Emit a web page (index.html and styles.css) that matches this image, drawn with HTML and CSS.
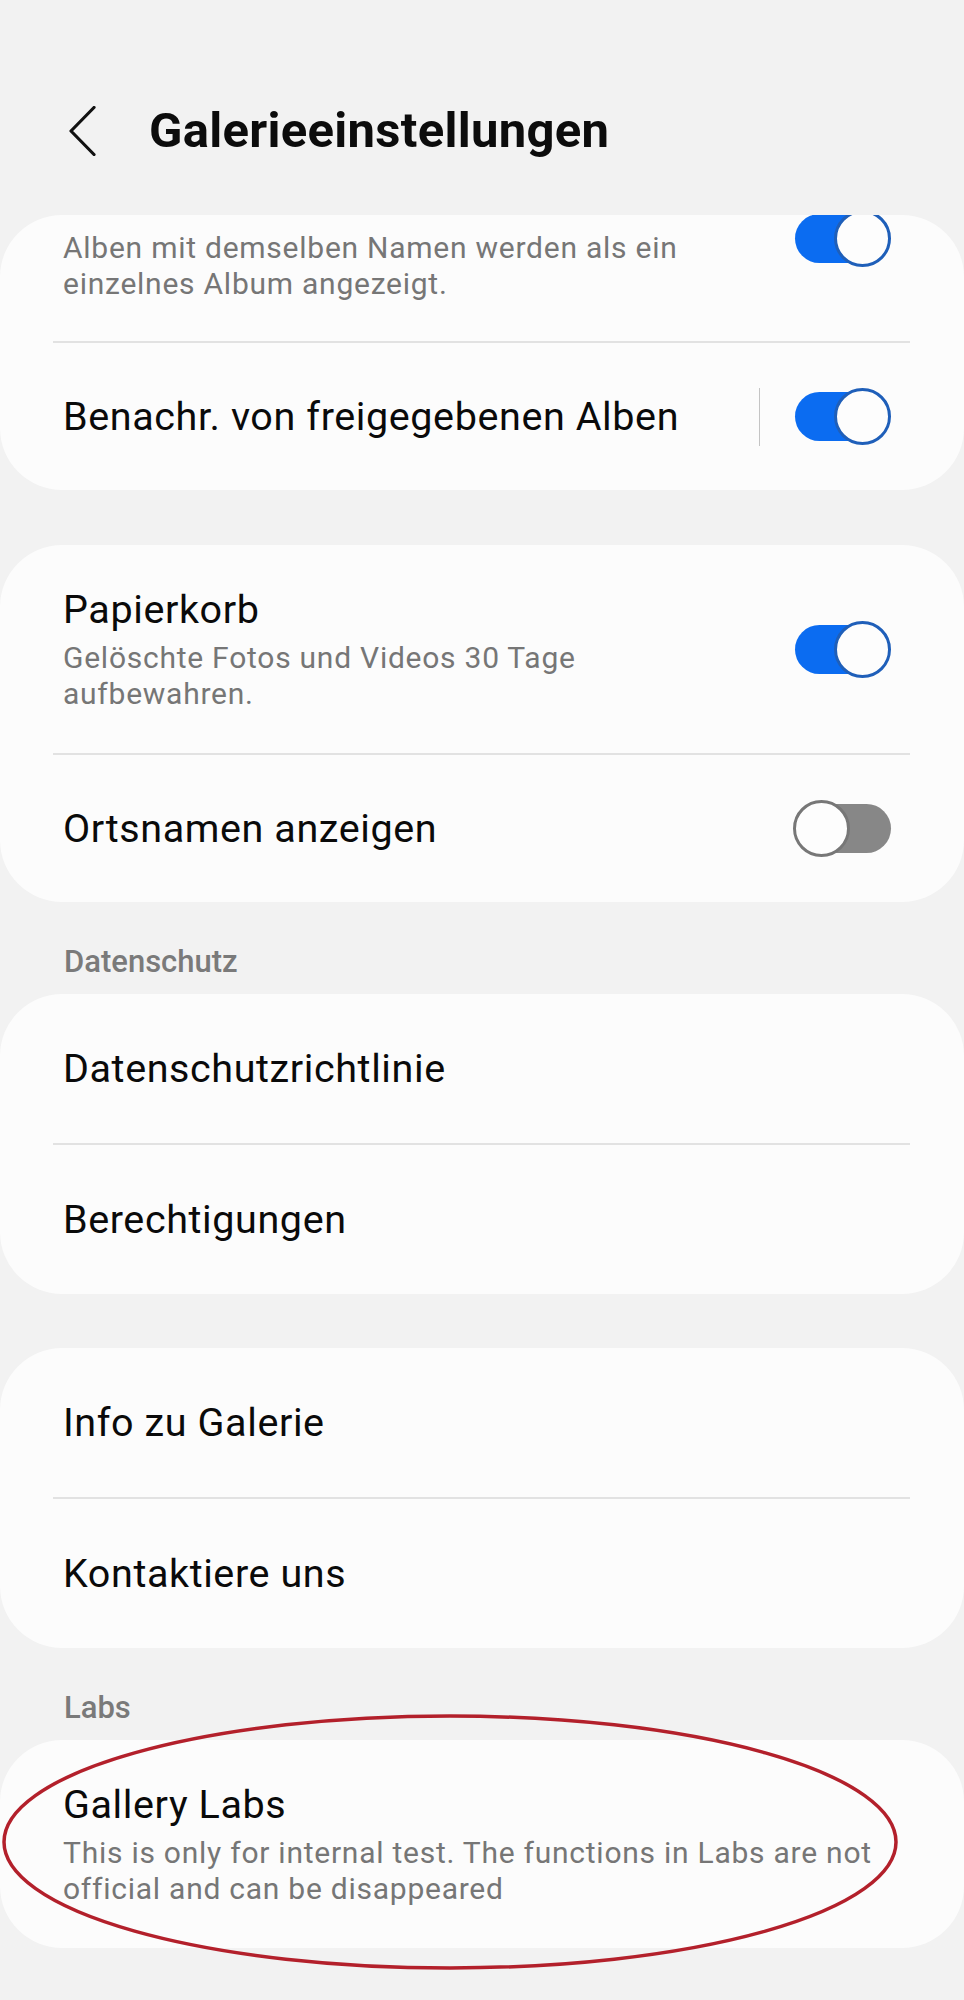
FILE: index.html
```html
<!DOCTYPE html>
<html lang="de">
<head>
<meta charset="utf-8">
<title>Galerieeinstellungen</title>
<link rel="stylesheet" href="styles.css">
</head>
<body>
<div class="screen">
  <header class="appbar">
    <svg class="back" width="30" height="50" viewBox="0 0 30 50" aria-hidden="true">
      <path d="M26 1.5 L3 25 L26 48.5" fill="none" stroke="#111" stroke-width="3.2" stroke-linecap="round" stroke-linejoin="round"/>
    </svg>
    <h1 class="title">Galerieeinstellungen</h1>
  </header>

  <section class="card">
    <div class="row row-clipped">
      <div class="text">
        <div class="sub">Alben mit demselben Namen werden als ein einzelnes Album angezeigt.</div>
      </div>
      <div class="switch on clipped"><span class="track"></span><span class="knob"></span></div>
    </div>
    <div class="divider"></div>
    <div class="row row-short">
      <div class="text"><div class="label">Benachr. von freigegebenen Alben</div></div>
      <span class="vsep"></span>
      <div class="switch on"><span class="track"></span><span class="knob"></span></div>
    </div>
  </section>

  <section class="card">
    <div class="row row-tall">
      <div class="text">
        <div class="label">Papierkorb</div>
        <div class="sub sub-narrow">Gelöschte Fotos und Videos 30 Tage aufbewahren.</div>
      </div>
      <div class="switch on"><span class="track"></span><span class="knob"></span></div>
    </div>
    <div class="divider"></div>
    <div class="row row-short">
      <div class="text"><div class="label">Ortsnamen anzeigen</div></div>
      <div class="switch off"><span class="track"></span><span class="knob"></span></div>
    </div>
  </section>

  <h2 class="section-title">Datenschutz</h2>
  <section class="card card-tight">
    <div class="row"><div class="text"><div class="label">Datenschutzrichtlinie</div></div></div>
    <div class="divider"></div>
    <div class="row"><div class="text"><div class="label">Berechtigungen</div></div></div>
  </section>

  <section class="card">
    <div class="row"><div class="text"><div class="label">Info zu Galerie</div></div></div>
    <div class="divider"></div>
    <div class="row"><div class="text"><div class="label">Kontaktiere uns</div></div></div>
  </section>

  <h2 class="section-title">Labs</h2>
  <div class="annotated">
    <section class="card card-tight">
      <div class="row row-tall">
        <div class="text">
          <div class="label">Gallery Labs</div>
          <div class="sub">This is only for internal test. The functions in Labs are not official and can be disappeared</div>
        </div>
      </div>
    </section>
    <svg class="mark" width="964" height="262" viewBox="0 0 964 262" aria-hidden="true">
      <ellipse cx="450" cy="128" rx="446" ry="126" fill="none" stroke="#b3202b" stroke-width="3.5"/>
    </svg>
  </div>
</div>
</body>
</html>
```

FILE: styles.css
```css
* { box-sizing: border-box; }

html, body {
  margin: 0;
  padding: 0;
  background: #f2f2f2;
}

body {
  font-family: Roboto, "Liberation Sans", Arial, sans-serif;
  color: #000;
}

.screen {
  width: 964px;
  min-height: 2000px;
  background: #f2f2f2;
}

.appbar {
  display: flex;
  align-items: center;
  height: 215px;
  padding: 102px 0 55px 68px;
}

.back {
  flex: none;
  display: block;
}

.title {
  margin: 0 0 0 51px;
  font-size: 49px;
  line-height: 58px;
  font-weight: 700;
  color: #0c0c0c;
  letter-spacing: 0.3px;
}

.card {
  background: #fcfcfc;
  border-radius: 62px;
  overflow: hidden;
  margin-bottom: 55px;
}

.card-tight {
  margin-bottom: 54px;
}

.row {
  display: flex;
  align-items: center;
  min-height: 149px;
  padding: 0 73px 0 63px;
}

.row-short {
  min-height: 147px;
}

.row-clipped {
  align-items: flex-start;
  height: 126px;
  min-height: 0;
  padding-top: 15px;
}

.row-tall {
  padding-top: 42px;
  padding-bottom: 41px;
}

.text {
  flex: 1;
  min-width: 0;
}

.label {
  font-size: 39.5px;
  line-height: 46px;
  color: #0a0a0a;
  letter-spacing: 0.6px;
}

.sub {
  font-size: 30px;
  line-height: 36px;
  color: #767676;
  margin-top: 7px;
  letter-spacing: 0.75px;
}

.row-clipped .sub {
  margin-top: 0;
  max-width: 650px;
}

.sub-narrow {
  max-width: 580px;
}

.divider {
  height: 2px;
  background: #e2e2e2;
  margin: 0 54px 0 53px;
}

.vsep {
  flex: none;
  width: 1.5px;
  height: 58px;
  background: #c4c4c4;
  margin-right: 33px;
}

.switch {
  flex: none;
  position: relative;
  width: 98px;
  height: 57px;
}

.switch.clipped {
  margin-top: -20px;
}

.track {
  position: absolute;
  top: 4px;
  width: 90px;
  height: 49px;
  border-radius: 25px;
}

.knob {
  position: absolute;
  top: 0;
  width: 57px;
  height: 57px;
  border-radius: 50%;
  background: #fdfdfd;
}

.switch.on .track {
  left: 2px;
  background: #0b6cf1;
}

.switch.on .knob {
  right: 0;
  border: 3px solid #1f5fb9;
}

.switch.off .track {
  right: 0;
  background: #878787;
}

.switch.off .knob {
  left: 0;
  border: 3px solid #777;
}

.section-title {
  margin: -14px 0 14px 0;
  padding-left: 64px;
  font-size: 31px;
  line-height: 37px;
  font-weight: 500;
  color: #7a7a7a;
}

.annotated {
  position: relative;
}

.mark {
  position: absolute;
  left: 0;
  top: -26px;
  pointer-events: none;
}
```
